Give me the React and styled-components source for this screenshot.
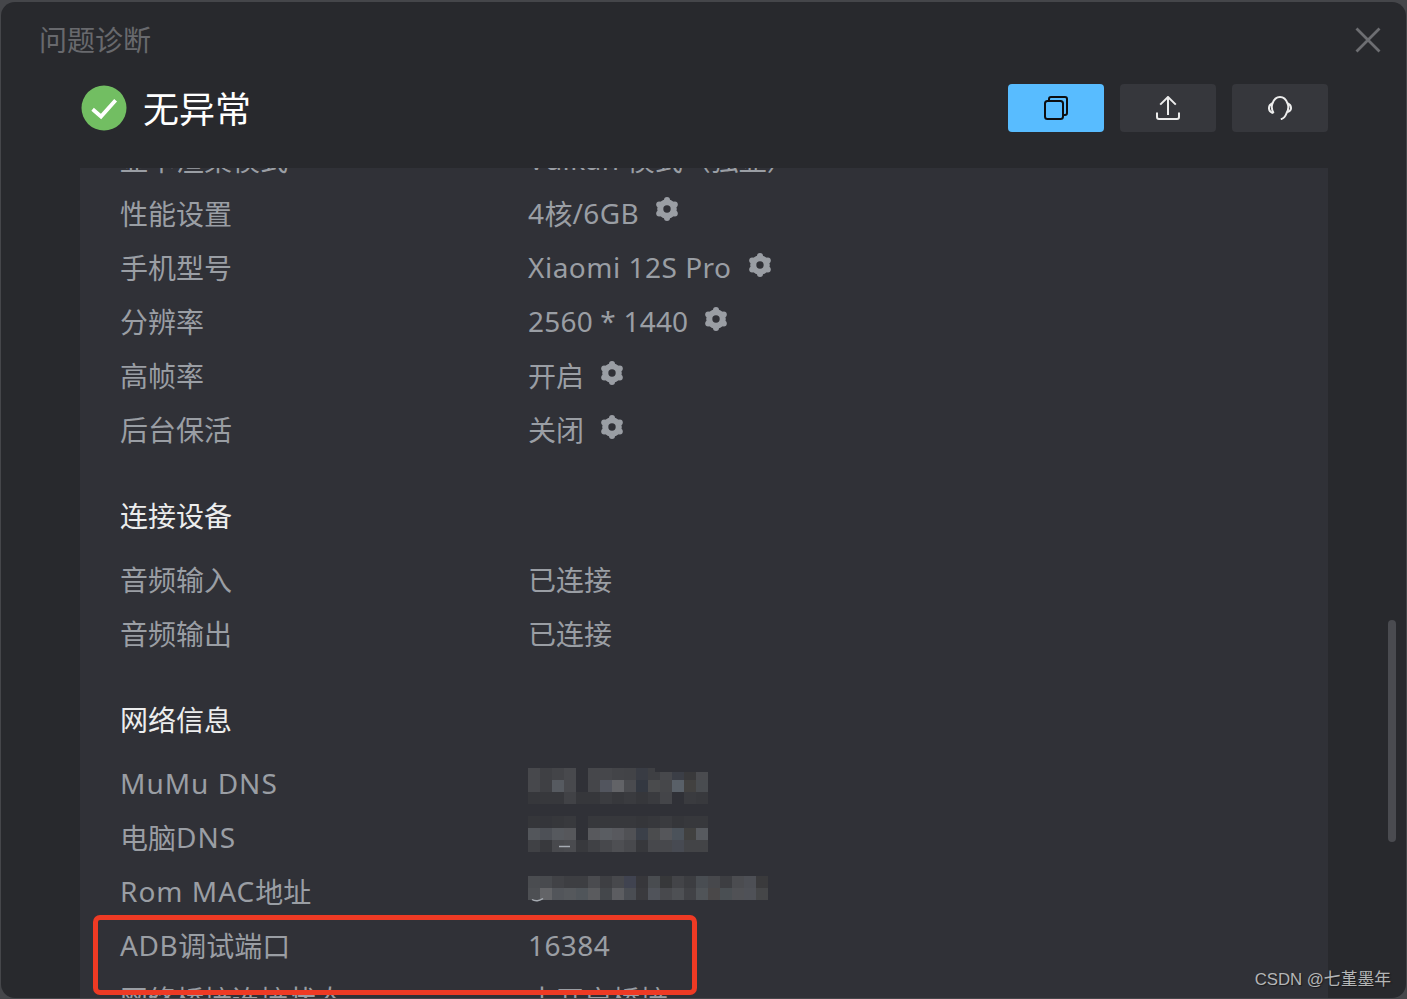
import React from "react";
import styled, { createGlobalStyle } from "styled-components";

const GlobalStyle = createGlobalStyle`
    html, body {
        margin: 0;
        padding: 0;
        background: #45464a;
    }
    body {
        font-family: "Noto Sans", "Noto Sans CJK SC", sans-serif;
    }
`;

const Frame = styled.div`
    position: relative;
    width: 1407px;
    height: 999px;
    box-sizing: border-box;
    padding: 2px 1px 1px 1px;
    background: #45464a;
    overflow: hidden;
`;

const Dialog = styled.div`
    display: flex;
    flex-direction: column;
    height: 100%;
    background: #28292d;
    border-radius: 14px;
    overflow: hidden;
`;

const TitleBar = styled.div`
    display: flex;
    align-items: center;
    justify-content: space-between;
    flex: 0 0 82px;
    box-sizing: border-box;
    padding: 0 25px 6px 38px;
`;

const Title = styled.h1`
    margin: 0;
    font-size: 28px;
    font-weight: 400;
    line-height: 40px;
    color: #68696d;
`;

const CloseButton = styled.button`
    display: flex;
    padding: 0;
    border: 0;
    background: none;
`;

const StatusBar = styled.div`
    display: flex;
    align-items: center;
    flex: 0 0 84px;
    box-sizing: border-box;
    padding: 0 78px 36px 80px;
`;

const StatusText = styled.div`
    margin: 4px 0 0 16px;
    flex: 1;
    font-size: 36px;
    line-height: 44px;
    color: #fff;
`;

const Actions = styled.div`
    display: flex;
    gap: 16px;
`;

const ActionButton = styled.button`
    display: flex;
    align-items: center;
    justify-content: center;
    width: 96px;
    height: 48px;
    padding: 0;
    border: 0;
    border-radius: 4px;
    background: ${props => (props.$active ? "#58bcff" : "#36373c")};
    color: ${props => (props.$active ? "#0d0e10" : "#ececec")};
`;

const Panel = styled.div`
    flex: 1;
    min-height: 0;
    margin: 0 78px 0 79px;
    background: #303137;
    overflow: hidden;
`;

const PanelContent = styled.div`
    margin-top: -35px;
    padding-left: 40px;
`;

const Row = styled.div`
    display: grid;
    grid-template-columns: 408px 1fr;
    height: 54px;
    align-items: center;
    font-size: 28px;
    line-height: 54px;
    color: #9a9ea4;
    white-space: nowrap;
`;

const Value = styled.div`
    display: flex;
    align-items: center;
    gap: 16px;
`;

// latin runs sit a pixel high and run a little wider than the installed face
const Latin = styled.span`
    display: inline-block;
    transform: translateY(-1px);
    letter-spacing: ${props => props.$track || 0}px;
`;

const GearWrap = styled.span`
    display: flex;
    margin-bottom: ${props => (props.$lift ? 10 : 6)}px;
`;

const SectionTitle = styled.h2`
    margin: 32px 0 10px;
    font-size: 28px;
    font-weight: 400;
    line-height: 54px;
    color: #eceded;
`;

const Thumb = styled.div`
    position: absolute;
    left: 1388px;
    top: 620px;
    width: 8px;
    height: 222px;
    border-radius: 4px;
    background: #4a4b50;
`;

const Highlight = styled.div`
    position: absolute;
    left: 93px;
    top: 915px;
    width: 604px;
    height: 80px;
    box-sizing: border-box;
    border: 5px solid #ee3a24;
    border-radius: 7px;
`;

const Watermark = styled.div`
    position: absolute;
    right: 16px;
    bottom: 8px;
    font-family: "Liberation Sans", "Noto Sans CJK SC", sans-serif;
    font-size: 16.8px;
    line-height: 22px;
    color: #b4b5b6;
    text-shadow: 1px 1px 1px #1c1c1e;
`;

const PANEL = "#303137";
const GEAR = "#9a9ea4";

const gearLobes = Array.from({ length: 6 }, (_, i) => {
    const a = (Math.PI / 3) * i - Math.PI / 2;
    return [12 + 9 * Math.cos(a), 12 + 9 * Math.sin(a)];
});

const Gear = ({ lift }) => (
    <GearWrap $lift={lift}>
        <svg width="24" height="24" viewBox="0 0 24 24">
            <circle cx="12" cy="12" r="9.8" fill={GEAR} />
            {gearLobes.map(([cx, cy], i) => (
                <circle key={i} cx={cx} cy={cy} r="3" fill={GEAR} />
            ))}
            <circle cx="12" cy="12" r="3.7" fill={PANEL} />
        </svg>
    </GearWrap>
);

const CheckBadge = () => (
    <svg width="46" height="46" viewBox="0 0 46 46">
        <circle cx="23" cy="23" r="22.5" fill="#72be62" />
        <path d="M11.6 24.3 L20 31.5 L34.6 15.2" fill="none" stroke="#fff" strokeWidth="3.8" />
    </svg>
);

const CloseIcon = () => (
    <svg width="26" height="26" viewBox="0 0 26 26">
        <path d="M1.5 1.5 L24.5 24.5 M24.5 1.5 L1.5 24.5" stroke="#6d6e72" strokeWidth="2.8" />
    </svg>
);

const CopyIcon = () => (
    <svg width="24" height="24" viewBox="0 0 24 24" fill="none" stroke="currentColor" strokeWidth="2">
        <rect x="1" y="5" width="18" height="18" rx="2.5" />
        <path d="M5 4.5 V3 a2 2 0 0 1 2 -2 H21 a2 2 0 0 1 2 2 V17 a2 2 0 0 1 -2 2 H19.5" />
    </svg>
);

const UploadIcon = () => (
    <svg width="24" height="24" viewBox="0 0 24 24" fill="none" stroke="currentColor" strokeWidth="2">
        <path d="M12 1.5 V19 M4.2 8.6 L12 1 L19.8 8.6" />
        <path d="M1 16.5 V21 a2 2 0 0 0 2 2 H21 a2 2 0 0 0 2 -2 V16.5" />
    </svg>
);

const HeadsetIcon = () => (
    <svg width="24" height="24" viewBox="0 0 24 24" fill="none" stroke="currentColor" strokeWidth="2">
        <path d="M5.6 17 C3.6 13.5 3.2 10.5 4.4 7.6 C6 3 9 1 12 1 C15 1 18 3 19.6 7.6 C20.8 10.5 20.2 14.5 18.4 17.5 C17.2 20.8 15.5 22.6 12.8 23.2" />
        <path d="M4.2 7.5 C2 8.5 0.9 10.5 1 12.5 C1.1 14.5 2.8 16.5 5.4 17" />
        <path d="M19.8 7.5 C22 8.5 23.1 10.5 23 12.5 C22.9 14 21.4 15.5 19.4 16" />
    </svg>
);

const MOSAICS = {
    dns: {
        top: 11,
        rows: [
            ["#47484c", "#3f4044", "#434448", "#48494d", null, "#46474b", "#46474b", "#434448", "#424347", "#393c44", "#3e3f43", "#47484c", "#3b3e46", "#39393b", "#4a4b4f"],
            ["#47484c", "#3f4044", "#565a60", "#48494d", null, "#45464a", "#52555e", "#626367", "#4a4b4f", "#333841", "#4a4b4d", "#46474a", "#596068", "#424140", "#494c50"],
            ["#36373b", "#37383c", "#37383c", "#414246", "#36373b", "#36373b", "#3b3c40", "#37383c", "#3a3b3f", "#36373b", "#3a3b3f", "#444549", "#303137", "#3a3b3f", "#38393d"],
        ],
        cover: { x: 127, y: 11, width: 53, height: 4 },
    },
    host: {
        top: 5,
        rows: [
            ["#35363a", "#34353a", "#36373b", "#38393d", null, "#37383c", "#37383c", "#37383c", "#37383c", "#35363a", "#37383c", "#3a3b3f", "#35363a", "#37383c", "#37383c"],
            ["#53565b", "#4d5056", "#56595e", "#56575b", null, "#58595d", "#5a5d62", "#58595e", "#505155", "#3b4049", "#4b4c4e", "#55565a", "#4b525a", "#414140", "#575a5f"],
            ["#404145", "#38393d", "#48494d", "#4a4b4f", "#38393d", "#404145", "#47484c", "#4e4f53", "#48494d", "#37383c", "#47484c", "#47484c", "#474a52", "#434447", "#434447"],
        ],
        peek: "M31 35.5 H42",
    },
    mac: {
        top: 11,
        rows: [
            ["#4a4c50", "#484a4e", "#414246", "#3d3e42", "#3d3e42", "#4a4b4f", "#3e3f43", "#47484c", "#404350", "#37373b", "#494c50", "#37383a", "#434448", "#3c3d41", "#494d52", "#47484c", "#3d3e42", "#4b4c50", "#4d4f55", "#3a3a3c"],
            ["#4d4f53", "#636467", "#52555a", "#55585c", "#50555a", "#5a5b5e", "#44474b", "#5c5d61", "#4a4d53", "#3a3a3e", "#50535a", "#48494d", "#4e5054", "#414246", "#505458", "#4a4849", "#4a4f53", "#505155", "#4f5157", "#454648"],
        ],
        peek: "M4 34.5 C7 36.5 12 36 15 33.5",
    },
};

const Mosaic = ({ name }) => {
    const { top, rows, peek, cover } = MOSAICS[name];
    return (
        <svg width="240" height="54" viewBox="0 0 240 54">
            {rows.map((cells, y) =>
                cells.map((fill, x) =>
                    fill ? <rect key={`${x}-${y}`} x={x * 12} y={top + y * 12} width="12" height="12" fill={fill} /> : null
                )
            )}
            {cover ? <rect {...cover} fill={PANEL} /> : null}
            {peek ? <path d={peek} fill="none" stroke="#a6abb2" strokeWidth="1.5" /> : null}
        </svg>
    );
};

const App = () => (
    <Frame>
        <GlobalStyle />
        <Dialog>
            <TitleBar>
                <Title>问题诊断</Title>
                <CloseButton>
                    <CloseIcon />
                </CloseButton>
            </TitleBar>
            <StatusBar>
                <CheckBadge />
                <StatusText>无异常</StatusText>
                <Actions>
                    <ActionButton $active>
                        <CopyIcon />
                    </ActionButton>
                    <ActionButton>
                        <UploadIcon />
                    </ActionButton>
                    <ActionButton>
                        <HeadsetIcon />
                    </ActionButton>
                </Actions>
            </StatusBar>
            <Panel>
                <PanelContent>
                    <Row><span>显卡渲染模式</span><Value><span><Latin $track={0.4}>Vulkan</Latin> 模式（独显）</span></Value></Row>
                    <Row><span>性能设置</span><Value><span><Latin $track={0.4}>4</Latin>核<Latin $track={0.4}>/6GB</Latin></span><Gear lift /></Value></Row>
                    <Row><span>手机型号</span><Value><Latin $track={0.5}>Xiaomi 12S Pro</Latin><Gear /></Value></Row>
                    <Row><span>分辨率</span><Value><Latin $track={0.2}>2560 * 1440</Latin><Gear /></Value></Row>
                    <Row><span>高帧率</span><Value>开启<Gear /></Value></Row>
                    <Row><span>后台保活</span><Value>关闭<Gear /></Value></Row>

                    <SectionTitle>连接设备</SectionTitle>
                    <Row><span>音频输入</span><Value>已连接</Value></Row>
                    <Row><span>音频输出</span><Value>已连接</Value></Row>

                    <SectionTitle>网络信息</SectionTitle>
                    <Row><span><Latin $track={1}>MuMu DNS</Latin></span><Value><Mosaic name="dns" /></Value></Row>
                    <Row><span>电脑<Latin $track={1}>DNS</Latin></span><Value><Mosaic name="host" /></Value></Row>
                    <Row><span><Latin $track={1}>Rom MAC</Latin>地址</span><Value><Mosaic name="mac" /></Value></Row>
                    <Row><span><Latin $track={0.6}>ADB</Latin>调试端口</span><Value><Latin $track={0.4}>16384</Latin></Value></Row>
                    <Row><span>网络桥接连接状态</span><Value>未开启桥接</Value></Row>
                </PanelContent>
            </Panel>
        </Dialog>
        <Thumb />
        <Highlight />
        <Watermark>CSDN @七堇墨年</Watermark>
    </Frame>
);

export default App;
